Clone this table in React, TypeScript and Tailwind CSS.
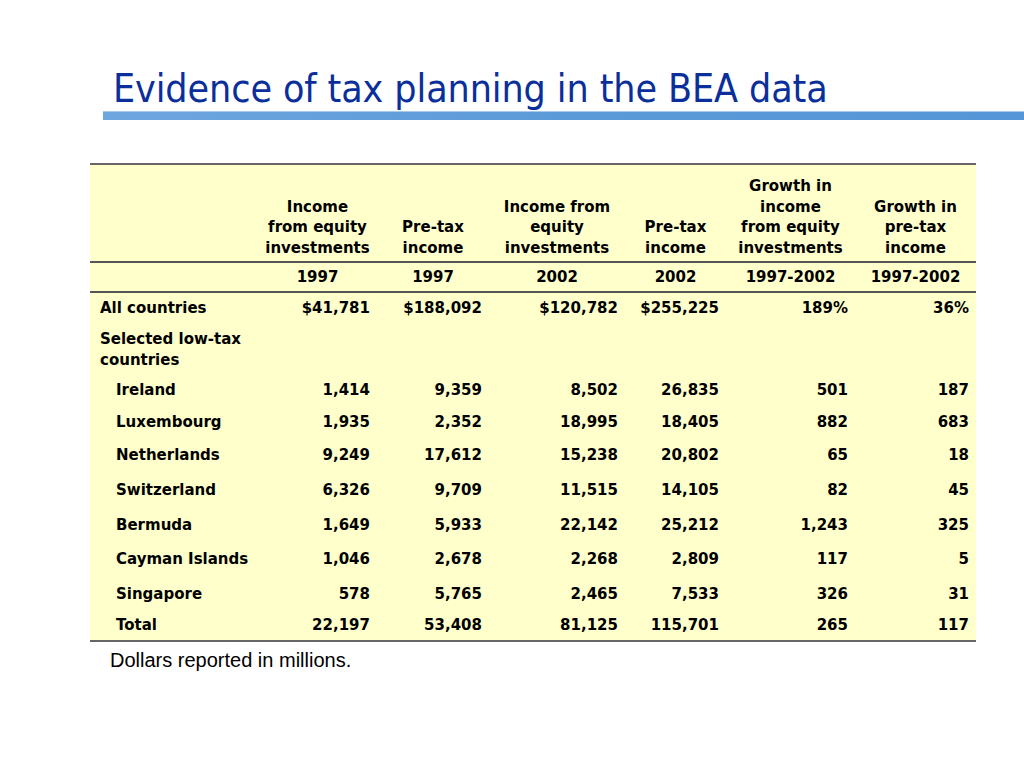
import React from 'react';

type Row = { label: string; values: string[]; indent?: boolean; h: string };

const cols = ['w-[168px]', 'w-[119px]', 'w-[112px]', 'w-[136px]', 'w-[101px]', 'w-[129px]', 'w-[121px]'];

const headers = [
  ['Income', 'from equity', 'investments'],
  ['Pre-tax', 'income'],
  ['Income from', 'equity', 'investments'],
  ['Pre-tax', 'income'],
  ['Growth in', 'income', 'from equity', 'investments'],
  ['Growth in', 'pre-tax', 'income'],
];

const years = ['1997', '1997', '2002', '2002', '1997-2002', '1997-2002'];

const rows: Row[] = [
  { label: 'All countries', values: ['$41,781', '$188,092', '$120,782', '$255,225', '189%', '36%'], h: 'h-[31px]' },
  { label: 'Selected low-tax countries', values: ['', '', '', '', '', ''], h: 'h-[51px]' },
  { label: 'Ireland', values: ['1,414', '9,359', '8,502', '26,835', '501', '187'], indent: true, h: 'h-[31px]' },
  { label: 'Luxembourg', values: ['1,935', '2,352', '18,995', '18,405', '882', '683'], indent: true, h: 'h-[32px]' },
  { label: 'Netherlands', values: ['9,249', '17,612', '15,238', '20,802', '65', '18'], indent: true, h: 'h-[35px]' },
  { label: 'Switzerland', values: ['6,326', '9,709', '11,515', '14,105', '82', '45'], indent: true, h: 'h-[35px]' },
  { label: 'Bermuda', values: ['1,649', '5,933', '22,142', '25,212', '1,243', '325'], indent: true, h: 'h-[34px]' },
  { label: 'Cayman Islands', values: ['1,046', '2,678', '2,268', '2,809', '117', '5'], indent: true, h: 'h-[35px]' },
  { label: 'Singapore', values: ['578', '5,765', '2,465', '7,533', '326', '31'], indent: true, h: 'h-[34px]' },
  { label: 'Total', values: ['22,197', '53,408', '81,125', '115,701', '265', '117'], indent: true, h: 'h-[29px]' },
];

export default function App() {
  return (
    <div className="w-[1024px] h-[768px] bg-white relative overflow-hidden">
      {/* Title */}
      <div className="pt-[67px] pl-[113px]">
        <h1 className="text-[39px] leading-[44px] text-[#0b2f9a] font-['DejaVu_Sans_Condensed',_'DejaVu_Sans',_sans-serif] tracking-[-0.1px]">
          Evidence of tax planning in the BEA data
        </h1>
      </div>
      <div className="ml-[103px] h-[9px] bg-gradient-to-r from-[#6ea6e0] via-[#5b9ad8] to-[#5596d8] border-t border-[#a9c9ec]" />

      {/* Table */}
      <div className="ml-[90px] mt-[43px] w-[886px] bg-[#ffffcc] border-t-[2px] border-t-[#666666] border-b-[2px] border-b-[#666666] font-['DejaVu_Sans',_sans-serif] font-bold text-[15px] text-black">
        <div className="flex h-[98px] border-b-[2px] border-b-[#555555]">
          <div className={cols[0]} />
          {headers.map((lines, i) => (
            <div key={i} className={`${cols[i + 1]} flex flex-col justify-end items-center pb-[3px] leading-[20.5px] text-center`}>
              {lines.map((l) => (
                <span key={l}>{l}</span>
              ))}
            </div>
          ))}
        </div>
        <div className="flex h-[30px] items-center border-b-[2px] border-b-[#555555]">
          <div className={cols[0]} />
          {years.map((y, i) => (
            <div key={i} className={`${cols[i + 1]} text-center`}>
              {y}
            </div>
          ))}
        </div>
        {rows.map((r) => (
          <div key={r.label} className={`flex items-center ${r.h}`}>
            <div className={`${cols[0]} ${r.indent ? 'pl-[26px]' : 'pl-[10px]'} leading-[21px] pr-2`}>{r.label}</div>
            {r.values.map((v, i) => (
              <div key={i} className={`${cols[i + 1]} text-right pr-[7px]`}>
                {v}
              </div>
            ))}
          </div>
        ))}
      </div>

      <p className="ml-[110px] mt-[6px] text-[20px] leading-[24px] text-black font-['Liberation_Sans',_Arial,_sans-serif]">
        Dollars reported in millions.
      </p>
    </div>
  );
}
